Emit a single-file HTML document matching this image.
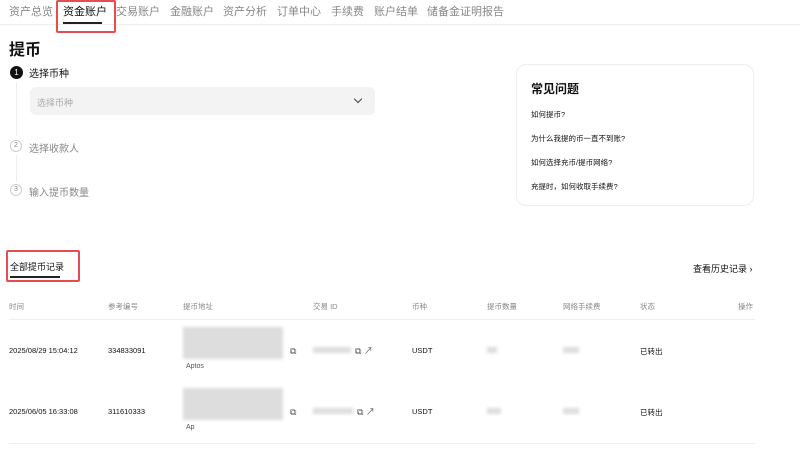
<!DOCTYPE html><html><head><meta charset="utf-8"><style>
*{margin:0;padding:0;box-sizing:border-box}
body{width:800px;height:459px;background:#fff;font-family:"Liberation Sans","Noto Sans CJK SC",sans-serif;color:#111;position:relative;overflow:hidden;font-size:9px}
.a{position:absolute;white-space:nowrap}
.nav{color:#888;font-size:11px;top:3px}
.g{color:#888}
.blur{position:absolute;background:#ddd;filter:blur(1.5px)}
.red{position:absolute;border:2px solid #e94b50;border-radius:2px}
</style></head><body>
<div class="a nav" style="left:9px">资产总览</div>
<div class="a nav" style="left:63px;color:#111">资金账户</div>
<div class="a nav" style="left:116px">交易账户</div>
<div class="a nav" style="left:170px">金融账户</div>
<div class="a nav" style="left:223px">资产分析</div>
<div class="a nav" style="left:277px">订单中心</div>
<div class="a nav" style="left:331px">手续费</div>
<div class="a nav" style="left:374px">账户结单</div>
<div class="a nav" style="left:427px">储备金证明报告</div>
<div class="a" style="left:63px;top:22px;width:39px;height:2px;background:#222"></div>
<div class="a" style="left:0;top:24px;width:800px;height:1px;background:#eee"></div>
<div class="red" style="left:56px;top:0;width:60px;height:33px"></div>
<div class="a" style="left:9px;top:36px;font-size:16px;font-weight:bold">提币</div>
<div class="a" style="left:10px;top:66px;width:13px;height:13px;border-radius:50%;background:#111;color:#fff;font-size:8px;text-align:center;line-height:13px">1</div>
<div class="a" style="left:29px;top:65px;font-size:10px">选择币种</div>
<div class="a" style="left:16px;top:82px;width:1px;height:54px;background:#eee"></div>
<div class="a" style="left:30px;top:87px;width:345px;height:28px;background:#f3f3f3;border-radius:6px"></div>
<div class="a g" style="left:37px;top:96px;color:#aaa">选择币种</div>
<div class="a" style="left:355px;top:96px;width:6px;height:6px;border-right:1.3px solid #444;border-bottom:1.3px solid #444;transform:rotate(45deg)"></div>
<div class="a g" style="left:10px;top:140px;width:12px;height:12px;border:1px solid #ccc;border-radius:50%;font-size:7px;text-align:center;line-height:10px">2</div>
<div class="a g" style="left:29px;top:140px;font-size:10px">选择收款人</div>
<div class="a" style="left:16px;top:155px;width:1px;height:27px;background:#eee"></div>
<div class="a g" style="left:10px;top:184px;width:12px;height:12px;border:1px solid #ccc;border-radius:50%;font-size:7px;text-align:center;line-height:10px">3</div>
<div class="a g" style="left:29px;top:184px;font-size:10px">输入提币数量</div>
<div class="a" style="left:516px;top:64px;width:238px;height:142px;border:1px solid #eee;border-radius:10px"></div>
<div class="a" style="left:531px;top:80px;font-size:12px;font-weight:bold">常见问题</div>
<div class="a" style="left:531px;top:109px;font-size:7.5px">如何提币?</div>
<div class="a" style="left:531px;top:133px;font-size:7.5px">为什么我提的币一直不到账?</div>
<div class="a" style="left:531px;top:157px;font-size:7.5px">如何选择充币/提币网络?</div>
<div class="a" style="left:531px;top:181px;font-size:7.5px">充提时，如何收取手续费?</div>
<div class="a" style="left:10px;top:260px;font-size:9px">全部提币记录</div>
<div class="a" style="left:10px;top:276px;width:50px;height:2px;background:#222"></div>
<div class="red" style="left:6px;top:250px;width:74px;height:32px"></div>
<div class="a" style="left:693px;top:262px;font-size:9px">查看历史记录 ›</div>
<div class="a g" style="left:9px;top:301px;font-size:7.5px">时间</div>
<div class="a g" style="left:108px;top:301px;font-size:7.5px">参考编号</div>
<div class="a g" style="left:183px;top:301px;font-size:7.5px">提币地址</div>
<div class="a g" style="left:313px;top:301px;font-size:7.5px">交易 ID</div>
<div class="a g" style="left:412px;top:301px;font-size:7.5px">币种</div>
<div class="a g" style="left:487px;top:301px;font-size:7.5px">提币数量</div>
<div class="a g" style="left:563px;top:301px;font-size:7.5px">网络手续费</div>
<div class="a g" style="left:640px;top:301px;font-size:7.5px">状态</div>
<div class="a g" style="left:738px;top:301px;font-size:7.5px">操作</div>
<div class="a" style="left:9px;top:319px;width:746px;height:1px;background:#f0f0f0"></div>
<div class="a" style="left:9px;top:346px;font-size:7.5px">2025/08/29 15:04:12</div>
<div class="a" style="left:108px;top:346px;font-size:7.5px">334833091</div>
<div class="blur" style="left:183px;top:327px;width:100px;height:32px"></div>
<div class="a" style="left:186px;top:363px;font-size:7px;color:#555">Aptos</div>
<div class="a" style="left:290px;top:346px;font-size:9px;color:#555">⧉</div>
<div class="blur" style="left:313px;top:347px;width:38px;height:6px"></div>
<div class="a" style="left:355px;top:344px;font-size:9px;color:#555">⧉ ↗</div>
<div class="a" style="left:412px;top:346px;font-size:7.5px">USDT</div>
<div class="blur" style="left:487px;top:347px;width:10px;height:6px"></div>
<div class="blur" style="left:563px;top:347px;width:16px;height:6px"></div>
<div class="a" style="left:640px;top:346px;font-size:7.5px">已转出</div>
<div class="a" style="left:9px;top:407px;font-size:7.5px">2025/06/05 16:33:08</div>
<div class="a" style="left:108px;top:407px;font-size:7.5px">311610333</div>
<div class="blur" style="left:183px;top:388px;width:100px;height:32px"></div>
<div class="a" style="left:186px;top:424px;font-size:7px;color:#555">Ap</div>
<div class="a" style="left:290px;top:407px;font-size:9px;color:#555">⧉</div>
<div class="blur" style="left:313px;top:408px;width:40px;height:6px"></div>
<div class="a" style="left:357px;top:405px;font-size:9px;color:#555">⧉ ↗</div>
<div class="a" style="left:412px;top:407px;font-size:7.5px">USDT</div>
<div class="blur" style="left:487px;top:408px;width:14px;height:6px"></div>
<div class="blur" style="left:563px;top:408px;width:16px;height:6px"></div>
<div class="a" style="left:640px;top:407px;font-size:7.5px">已转出</div>
<div class="a" style="left:9px;top:443px;width:746px;height:1px;background:#f0f0f0"></div>
</body></html>
